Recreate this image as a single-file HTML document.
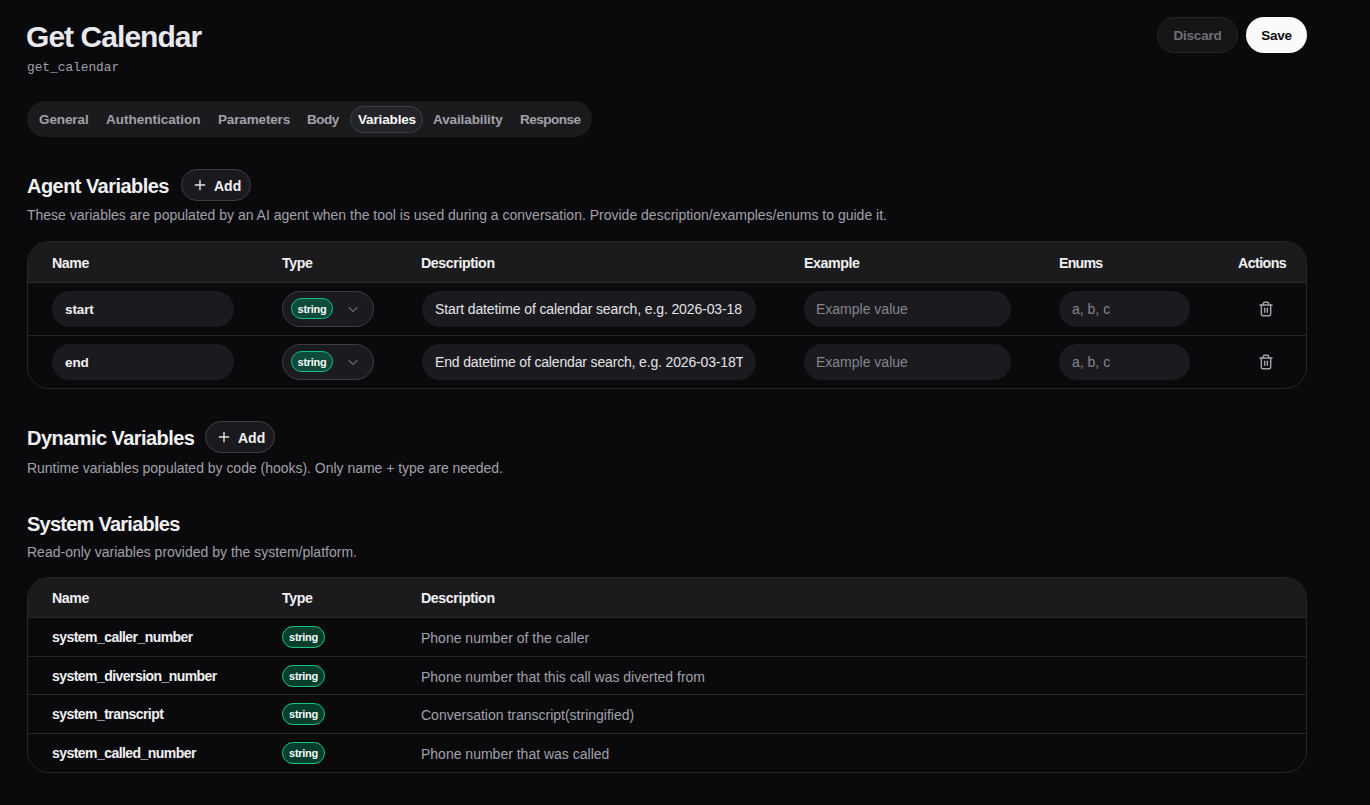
<!DOCTYPE html>
<html><head><meta charset="utf-8">
<style>
*{box-sizing:border-box;margin:0;padding:0}
html,body{width:1370px;height:805px;overflow:hidden;background:#0a0a0c;font-family:"Liberation Sans",sans-serif;color:#ececef}
.t{position:absolute;white-space:nowrap;line-height:1}
.title{left:26px;top:22px;font-size:30px;font-weight:700;color:#e9e9ed;letter-spacing:-0.95px}
.slug{left:27px;top:62px;font-family:"Liberation Mono",monospace;font-size:12.8px;color:#a1a1a8}
.btn{position:absolute;border-radius:18px;display:flex;align-items:center;justify-content:center;font-size:13.5px;font-weight:700;letter-spacing:-0.2px}
.discard{left:1157px;top:17px;width:81px;height:36px;background:#151518;border:1px solid #26262a;color:#6f6f75}
.save{left:1246px;top:17px;width:61px;height:36px;background:#fafafa;color:#0a0a0c}
.tabs{position:absolute;left:27px;top:101px;width:565px;height:36px;background:#1b1b1e;border-radius:18px}
.tab{position:absolute;top:102px;height:36px;line-height:36px;font-size:13.5px;font-weight:700;color:#a1a1aa;letter-spacing:0px;white-space:nowrap}
.pill{position:absolute;left:350px;top:106px;width:73px;height:27px;border-radius:14px;background:#242428;border:1px solid #404046}
.h2{font-size:20px;font-weight:700;color:#f1f1f3;letter-spacing:-0.55px}
.desc{font-size:14px;color:#a1a1aa}
.add{position:absolute;height:32px;width:70px;border-radius:16px;border:1px solid #3d3d44;background:#1a1a1e}
.add svg{position:absolute;left:12px;top:9px}
.add span{position:absolute;left:32px;top:8.5px;font-size:14px;font-weight:700;color:#f1f1f3;line-height:1}
.tbl{position:absolute;left:27px;width:1280px;border:1px solid #27272b;border-radius:22px;overflow:hidden;background:#0a0a0c}
.thead{position:absolute;left:0;top:0;width:100%;background:#1b1b1e;border-bottom:1px solid #2a2a2e}
.rowline{position:absolute;left:0;width:100%;height:1px;background:#27272b}
.th{position:absolute;white-space:nowrap;line-height:1;font-size:14.2px;font-weight:700;color:#f1f1f3;letter-spacing:-0.4px}
.bold{position:absolute;white-space:nowrap;line-height:1;font-size:14px;font-weight:700;color:#f1f1f3;letter-spacing:-0.55px}
.reg{position:absolute;white-space:nowrap;line-height:1;font-size:14px;color:#a1a1aa}
.inp{position:absolute;height:36px;border-radius:18px;background:#1b1b1f;font-size:14px;display:flex;align-items:center;overflow:hidden;white-space:nowrap;color:#e4e4e7}
.inp.ph{color:#85858c}
.inp.b{font-weight:700;letter-spacing:-0.1px;font-size:13.5px;color:#f1f1f3}
.badge{position:absolute;height:21px;width:42px;border-radius:11px;background:#0e4a39;border:1.5px solid #12c48b;color:#f4fbf8;font-size:11px;font-weight:700;letter-spacing:-0.3px;display:flex;align-items:center;justify-content:center;padding-top:1px}
.badge.s{height:22px;width:43px;background:#063e2d;padding-top:0}
.sel{position:absolute;height:36px;width:92px;border-radius:18px;border:1px solid #3d3d44;background:#1b1b1f}
.sel svg{position:absolute;left:65px;top:13px}
.trash{position:absolute;left:1258px}
</style></head><body>
<div class="t title">Get Calendar</div>
<div class="t slug">get_calendar</div>
<div class="btn discard">Discard</div>
<div class="btn save">Save</div>

<div class="tabs"></div>
<div class="pill"></div>
<div class="tab" style="left:39px;letter-spacing:-0.1px">General</div>
<div class="tab" style="left:106px;letter-spacing:0px">Authentication</div>
<div class="tab" style="left:218px;letter-spacing:-0.15px">Parameters</div>
<div class="tab" style="left:307px;letter-spacing:-0.5px">Body</div>
<div class="tab" style="left:358px;color:#fafafa;letter-spacing:-0.15px">Variables</div>
<div class="tab" style="left:433px;letter-spacing:-0.1px">Availability</div>
<div class="tab" style="left:520px;letter-spacing:-0.5px">Response</div>

<div class="t h2" style="left:27px;top:176px">Agent Variables</div>
<div class="add" style="left:181px;top:169px"><svg width="12" height="12" viewBox="0 0 12 12"><path d="M6 0.8v10.4M0.8 6h10.4" stroke="#e4e4e7" stroke-width="1.4" fill="none"/></svg><span>Add</span></div>
<div class="t desc" style="left:27px;top:208px">These variables are populated by an AI agent when the tool is used during a conversation. Provide description/examples/enums to guide it.</div>

<div class="tbl" style="top:241px;height:148px">
  <div class="thead" style="height:41px"></div>
  <div class="rowline" style="top:93px"></div>
</div>
<div class="th" style="left:52px;top:256px">Name</div>
<div class="th" style="left:282px;top:256px">Type</div>
<div class="th" style="left:421px;top:256px">Description</div>
<div class="th" style="left:804px;top:256px">Example</div>
<div class="th" style="left:1059px;top:256px;letter-spacing:-0.8px">Enums</div>
<div class="th" style="left:1238px;top:256px;letter-spacing:-0.55px">Actions</div>

<div class="inp b" style="left:52px;top:291px;width:182px;padding-left:13px">start</div>
<div class="sel" style="left:282px;top:291px"><svg width="10" height="8" viewBox="0 0 10 8"><path d="M0.8 2.2l4.2 4.2 4.2-4.2" stroke="#66666d" stroke-width="1.3" fill="none"/></svg></div>
<div class="badge" style="left:291px;top:298px">string</div>
<div class="inp" style="left:422px;top:291px;width:334px;padding-left:13px"><span style="display:block;width:307px;overflow:hidden;letter-spacing:-0.12px">Start datetime of calendar search, e.g. 2026-03-18T00:00:00</span></div>
<div class="inp ph" style="left:804px;top:291px;width:207px;padding-left:12px">Example value</div>
<div class="inp ph" style="left:1059px;top:291px;width:131px;padding-left:13px">a, b, c</div>
<svg class="trash" style="top:301px" width="16" height="16" viewBox="0 0 24 24" fill="none" stroke="#a1a1aa" stroke-width="2.2" stroke-linecap="round" stroke-linejoin="round"><path d="M3 6h18"/><path d="M19 6v14c0 1-1 2-2 2H7c-1 0-2-1-2-2V6"/><path d="M8 6V4c0-1 1-2 2-2h4c1 0 2 1 2 2v2"/><line x1="10" y1="11" x2="10" y2="17"/><line x1="14" y1="11" x2="14" y2="17"/></svg>

<div class="inp b" style="left:52px;top:344px;width:182px;padding-left:13px">end</div>
<div class="sel" style="left:282px;top:344px"><svg width="10" height="8" viewBox="0 0 10 8"><path d="M0.8 2.2l4.2 4.2 4.2-4.2" stroke="#66666d" stroke-width="1.3" fill="none"/></svg></div>
<div class="badge" style="left:291px;top:351px">string</div>
<div class="inp" style="left:422px;top:344px;width:334px;padding-left:13px"><span style="display:block;width:307.5px;overflow:hidden;letter-spacing:-0.16px">End datetime of calendar search, e.g. 2026-03-18T23:59:59</span></div>
<div class="inp ph" style="left:804px;top:344px;width:207px;padding-left:12px">Example value</div>
<div class="inp ph" style="left:1059px;top:344px;width:131px;padding-left:13px">a, b, c</div>
<svg class="trash" style="top:354px" width="16" height="16" viewBox="0 0 24 24" fill="none" stroke="#a1a1aa" stroke-width="2.2" stroke-linecap="round" stroke-linejoin="round"><path d="M3 6h18"/><path d="M19 6v14c0 1-1 2-2 2H7c-1 0-2-1-2-2V6"/><path d="M8 6V4c0-1 1-2 2-2h4c1 0 2 1 2 2v2"/><line x1="10" y1="11" x2="10" y2="17"/><line x1="14" y1="11" x2="14" y2="17"/></svg>

<div class="t h2" style="left:27px;top:428px">Dynamic Variables</div>
<div class="add" style="left:205px;top:421px"><svg width="12" height="12" viewBox="0 0 12 12"><path d="M6 0.8v10.4M0.8 6h10.4" stroke="#e4e4e7" stroke-width="1.4" fill="none"/></svg><span>Add</span></div>
<div class="t desc" style="left:27px;top:460.5px;letter-spacing:-0.02px">Runtime variables populated by code (hooks). Only name + type are needed.</div>

<div class="t h2" style="left:27px;top:514px;letter-spacing:-0.75px">System Variables</div>
<div class="t desc" style="left:27px;top:545px">Read-only variables provided by the system/platform.</div>

<div class="tbl" style="top:577px;height:196px">
  <div class="thead" style="height:40px"></div>
  <div class="rowline" style="top:78px"></div>
  <div class="rowline" style="top:116px"></div>
  <div class="rowline" style="top:155px"></div>
</div>
<div class="th" style="left:52px;top:591px">Name</div>
<div class="th" style="left:282px;top:591px">Type</div>
<div class="th" style="left:421px;top:591px">Description</div>

<div class="bold" style="left:52px;top:630px">system_caller_number</div>
<div class="badge s" style="left:282px;top:626px">string</div>
<div class="reg" style="left:421px;top:631px">Phone number of the caller</div>

<div class="bold" style="left:52px;top:669px">system_diversion_number</div>
<div class="badge s" style="left:282px;top:665px">string</div>
<div class="reg" style="left:421px;top:670px">Phone number that this call was diverted from</div>

<div class="bold" style="left:52px;top:707px">system_transcript</div>
<div class="badge s" style="left:282px;top:703px">string</div>
<div class="reg" style="left:421px;top:708px">Conversation transcript(stringified)</div>

<div class="bold" style="left:52px;top:746px">system_called_number</div>
<div class="badge s" style="left:282px;top:742px">string</div>
<div class="reg" style="left:421px;top:747px">Phone number that was called</div>
</body></html>
